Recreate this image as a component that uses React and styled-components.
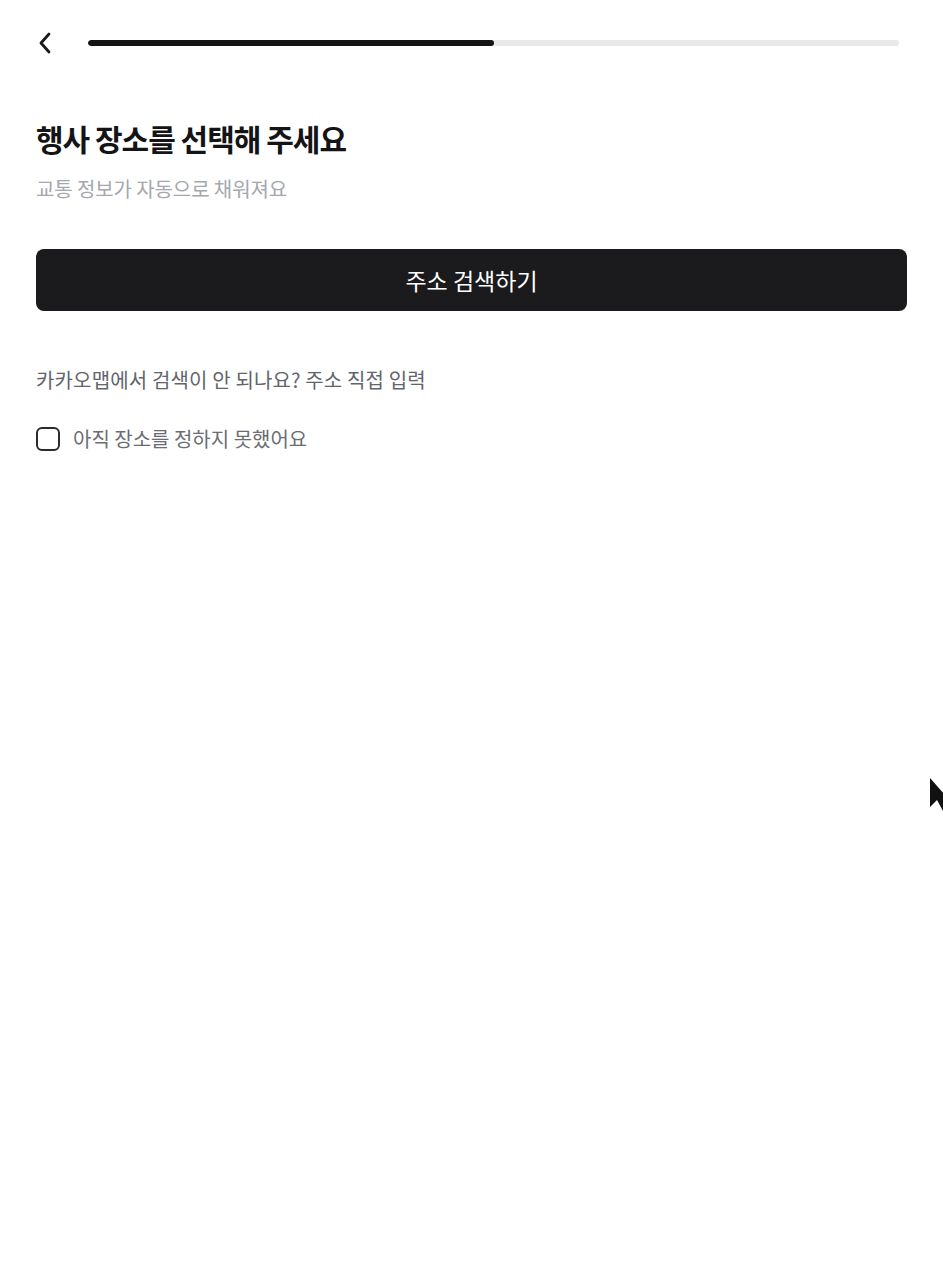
import React, { useState } from 'react'
import styled, { createGlobalStyle } from 'styled-components'

const GlobalStyle = createGlobalStyle`
  html, body {
    margin: 0;
    padding: 0;
    background: #ffffff;
  }
  body {
    font-family: "Noto Sans CJK KR", "Noto Sans", sans-serif;
    -webkit-font-smoothing: antialiased;
  }
`

const Page = styled.div`
  position: relative;
  width: 943px;
  height: 1288px;
  background: #fff;
  box-sizing: border-box;
  padding: 0 36px;
  overflow: hidden;
`

const TopBar = styled.div`
  display: flex;
  align-items: center;
  height: 86px;
  gap: 34px;
  padding-right: 8px;
`

const BackButton = styled.button`
  border: 0;
  background: none;
  padding: 0;
  width: 18px;
  height: 24px;
  display: flex;
  align-items: center;
  justify-content: center;
  cursor: pointer;
  color: #1a1a1c;
`

const Track = styled.div`
  flex: 1;
  height: 6px;
  border-radius: 3px;
  background: #e9e9eb;
  overflow: hidden;
`

const Fill = styled.div`
  height: 100%;
  border-radius: 3px;
  background: #141414;
`

const Title = styled.h1`
  margin: 32px 0 0;
  font-size: 30px;
  line-height: 40px;
  font-weight: 700;
  color: #141416;
  letter-spacing: -1px;
`

const Subtitle = styled.p`
  margin: 17px 0 0;
  font-size: 20px;
  line-height: 28px;
  color: #a4a7ad;
  letter-spacing: -0.1px;
`

const PrimaryButton = styled.button`
  display: flex;
  align-items: center;
  justify-content: center;
  width: 100%;
  height: 62px;
  margin-top: 46px;
  border: 0;
  border-radius: 8px;
  background: #1b1b1d;
  color: #fff;
  font-family: inherit;
  font-size: 23px;
  font-weight: 400;
  cursor: pointer;
`

const HelpText = styled.p`
  margin: 55px 0 0;
  font-size: 20px;
  line-height: 28px;
  color: #62656c;
  letter-spacing: 0.15px;
`

const CheckRow = styled.label`
  display: flex;
  align-items: center;
  gap: 13px;
  margin-top: 31px;
  cursor: pointer;
  font-size: 20px;
  line-height: 28px;
  color: #6a6d73;
`

const Box = styled.span`
  width: 24px;
  height: 24px;
  box-sizing: border-box;
  border: 2px solid #2a2a2c;
  border-radius: 6px;
  background: ${p => (p.$checked ? '#1b1b1d' : '#fff')};
`

const HiddenInput = styled.input`
  display: none;
`

const Cursor = styled.svg`
  position: absolute;
  left: 929px;
  top: 777px;
`

export default function App() {
  const [checked, setChecked] = useState(false)
  const progress = 50

  return (
    <>
      <GlobalStyle />
      <Page>
        <TopBar>
          <BackButton aria-label="뒤로">
            <svg width="16" height="24" viewBox="0 0 16 24" fill="none">
              <path d="M12 3 L4 12 L12 21" stroke="currentColor" strokeWidth="2.8" strokeLinecap="round" strokeLinejoin="round" />
            </svg>
          </BackButton>
          <Track>
            <Fill style={{ width: `${progress}%` }} />
          </Track>
        </TopBar>

        <Title>행사 장소를 선택해 주세요</Title>
        <Subtitle>교통 정보가 자동으로 채워져요</Subtitle>

        <PrimaryButton>주소 검색하기</PrimaryButton>

        <HelpText>카카오맵에서 검색이 안 되나요? 주소 직접 입력</HelpText>

        <CheckRow>
          <HiddenInput type="checkbox" checked={checked} onChange={e => setChecked(e.target.checked)} />
          <Box $checked={checked} />
          아직 장소를 정하지 못했어요
        </CheckRow>

        <Cursor width="16" height="36" viewBox="0 0 16 36">
          <path d="M1 1 L1 30 L8 23 L14 34 L16 33 L16 18 Z" fill="#111" />
        </Cursor>
      </Page>
    </>
  )
}
